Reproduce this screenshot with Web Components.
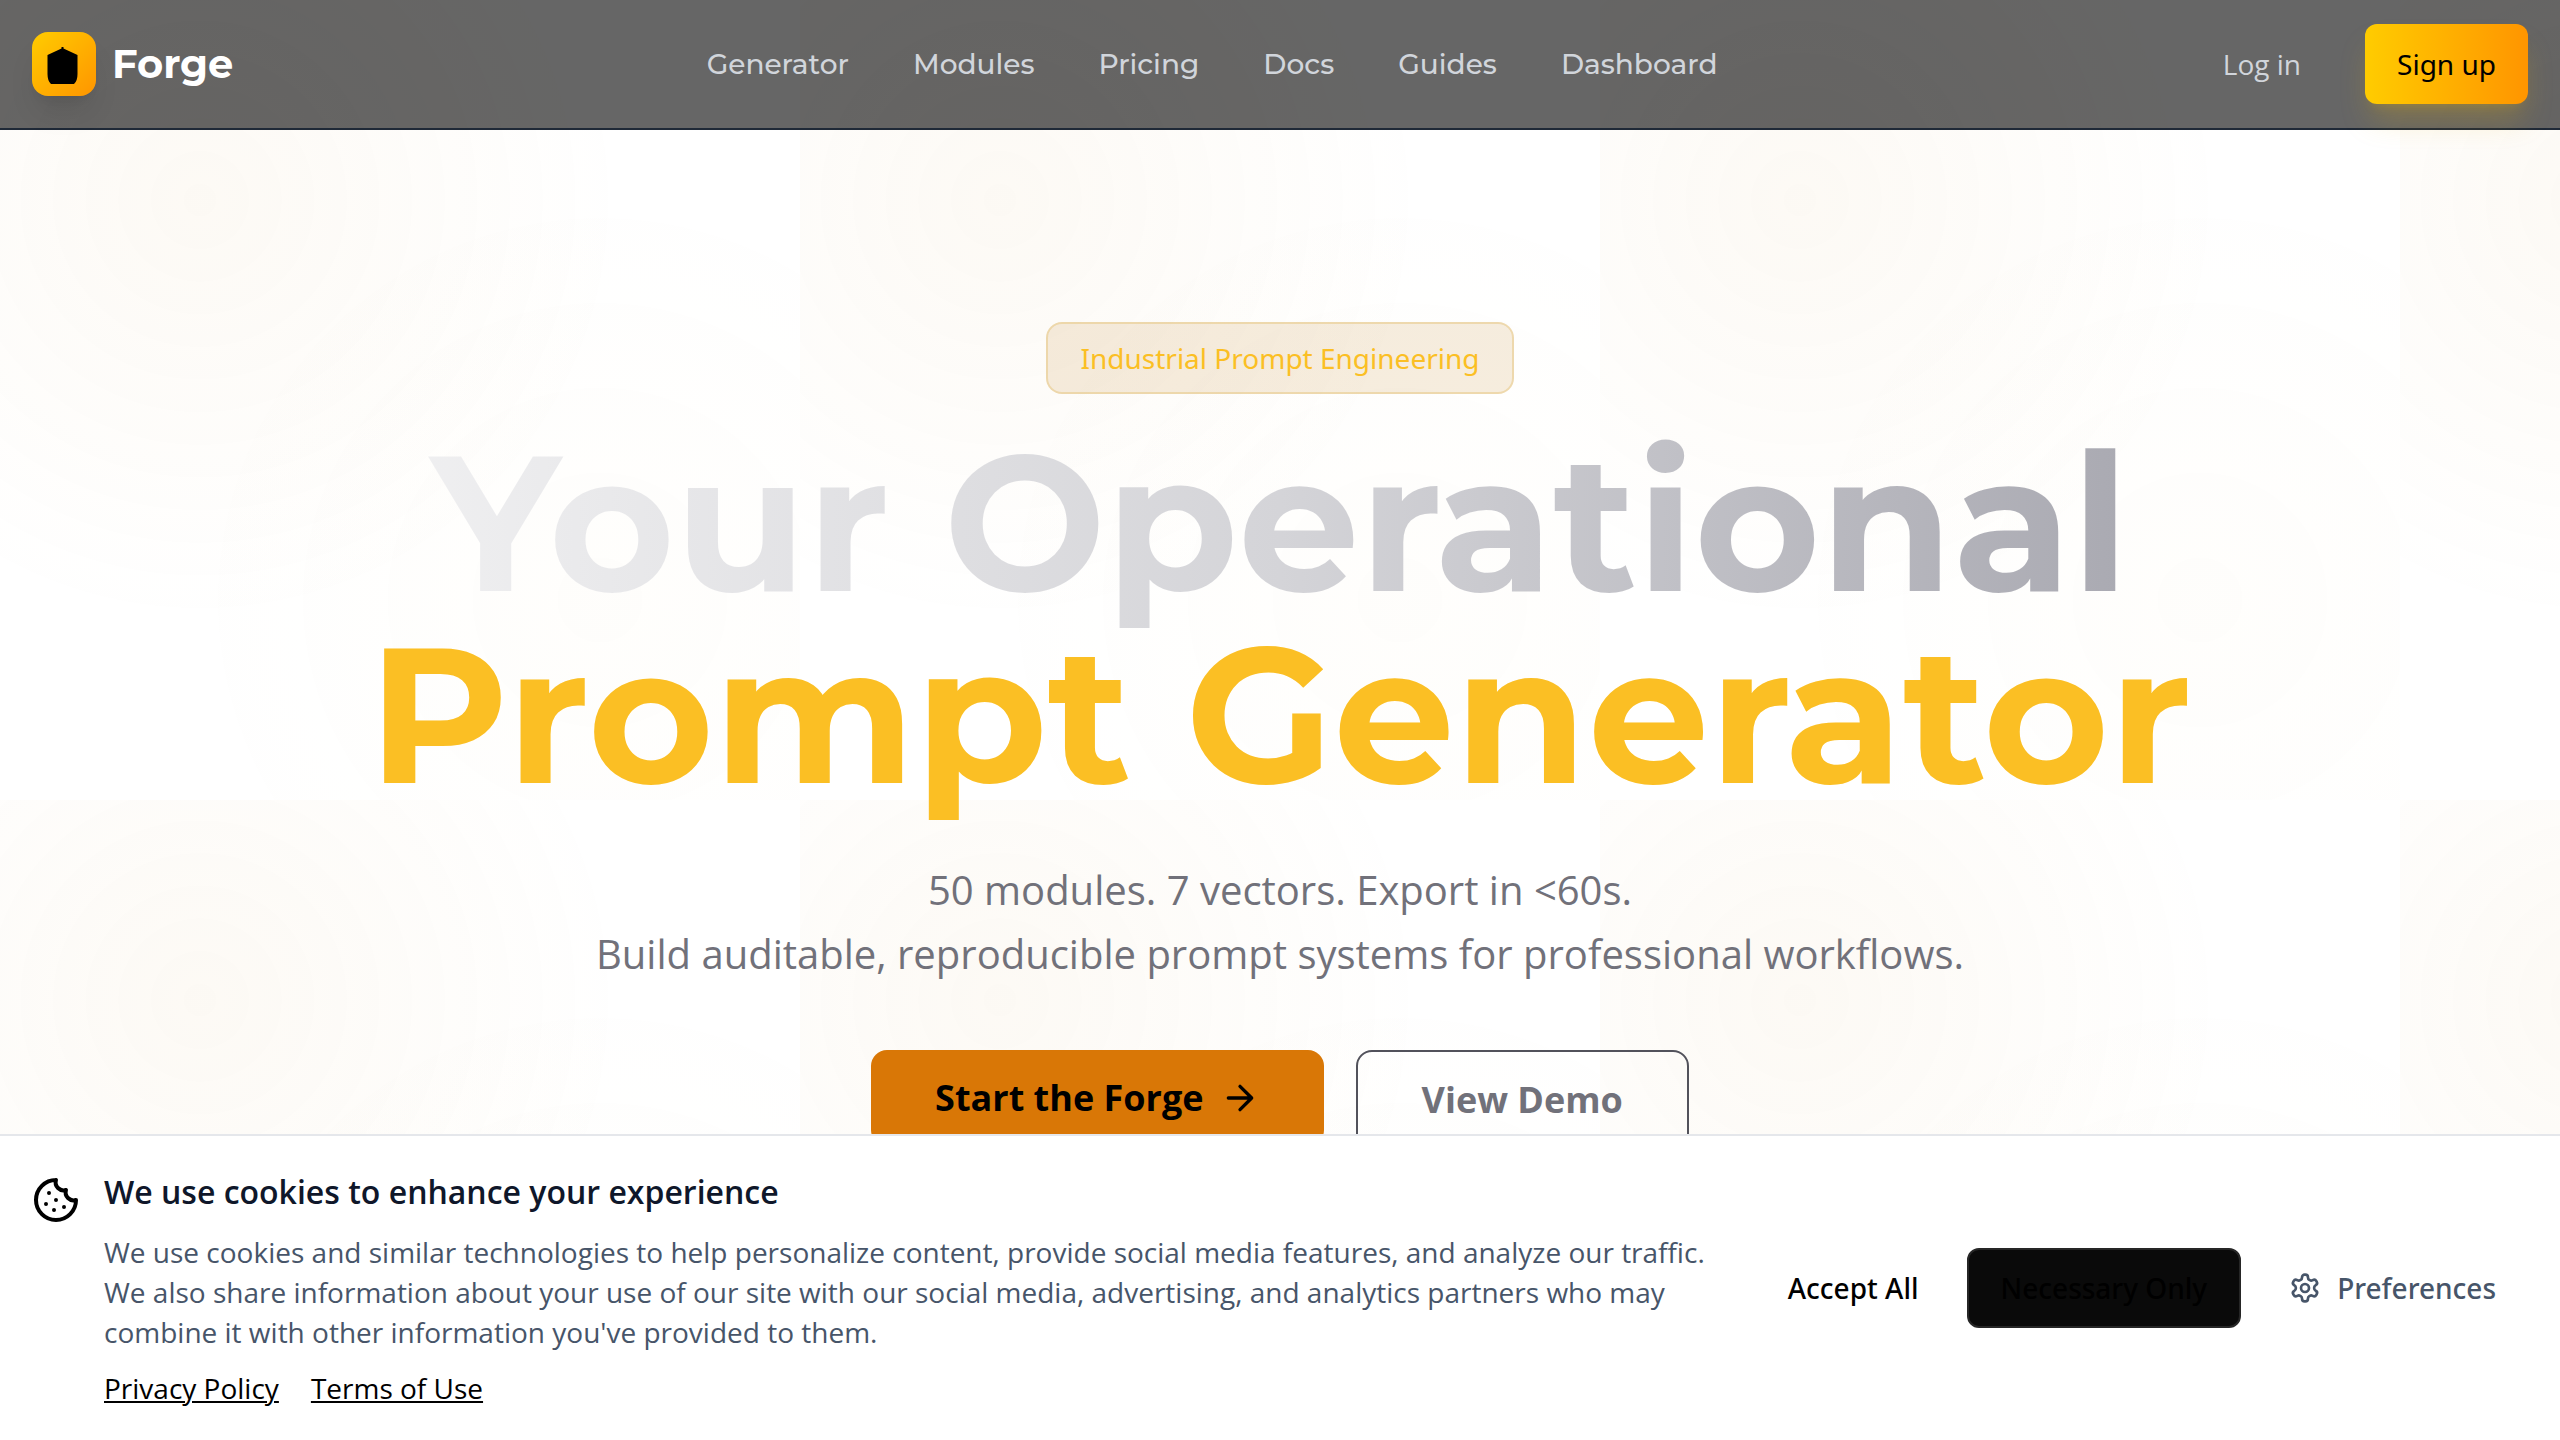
<!DOCTYPE html>
<html lang="en">
<head>
<meta charset="utf-8">
<meta name="viewport" content="width=device-width, initial-scale=1">
<title>Forge</title>
<style>
  body { margin: 0; background: #fff; font-family: "Open Sans", "Noto Sans", sans-serif; --display: Montserrat, "Open Sans", sans-serif; --control: "Noto Sans", "Open Sans", sans-serif; }
</style>
</head>
<body>
<forge-header>
  <forge-nav-link href="#generator">Generator</forge-nav-link>
  <forge-nav-link href="#modules">Modules</forge-nav-link>
  <forge-nav-link href="#pricing">Pricing</forge-nav-link>
  <forge-nav-link href="#docs">Docs</forge-nav-link>
  <forge-nav-link href="#guides">Guides</forge-nav-link>
  <forge-nav-link href="#dashboard">Dashboard</forge-nav-link>
</forge-header>
<forge-hero>
  <span slot="badge">Industrial Prompt Engineering</span>
  <span slot="lead">Your Operational</span>
  <span slot="accent">Prompt Generator</span>
</forge-hero>
<forge-cookies></forge-cookies>

<script>
const define = (name, html) => {
  const template = document.createElement('template');
  template.innerHTML = html;
  customElements.define(name, class extends HTMLElement {
    constructor() {
      super();
      this.attachShadow({ mode: 'open' }).append(template.content.cloneNode(true));
    }
    connectedCallback() {
      const link = this.shadowRoot.querySelector('a[data-host]');
      if (link) link.href = this.getAttribute('href') || '#';
    }
  });
};

define('forge-nav-link', `
<style>
  :host { display: block; }
  a { color: #d1d5db; text-decoration: none; font: 500 28px/40px var(--display); }
</style>
<a data-host><slot></slot></a>`);

define('forge-button', `
<style>
  :host { display: block; }
  button { display: flex; align-items: center; justify-content: center; gap: 16px; box-sizing: border-box; height: 80px; padding: 0 32px; margin: 0; border: 0; border-radius: 12px; background: transparent; color: #000; font: 500 28px/40px var(--control); white-space: nowrap; cursor: pointer; }
  :host([kind="muted"]) button { color: #d1d5db; font-family: "Open Sans", "Noto Sans", sans-serif; }
  :host([kind="slate"]) button { color: #475569; }
  :host([kind="gold"]) button { font-weight: 400; background: linear-gradient(to right, #ffcc00, #ff9500); box-shadow: 0 20px 30px -6px rgba(234,179,8,.25), 0 8px 12px -8px rgba(234,179,8,.25); }
  :host([kind="dark"]) button { background: #0a0a0a; border: 2px solid #262626; }
  :host([size="lg"]) button { height: 96px; padding: 0 64px; border-radius: 16px; font: 700 36px/56px "Open Sans", "Noto Sans", sans-serif; }
  :host([kind="amber"]) button { background: #d97706; }
  :host([kind="outline"]) button { height: 100px; border: 2px solid #52525b; color: #71717a; }
</style>
<button type="button"><slot></slot></button>`);

define('forge-header', `
<style>
  :host { display: block; position: sticky; top: 0; z-index: 10; background: rgba(0,0,0,.6); border-bottom: 2px solid #1f2937; }
  .bar { display: flex; align-items: center; justify-content: space-between; height: 128px; padding: 0 32px; }
  .brand { display: flex; align-items: center; gap: 16px; color: #fff; text-decoration: none; font: 700 40px/56px var(--display); }
  .mark { display: grid; place-items: center; width: 64px; height: 64px; border-radius: 16px; background: linear-gradient(135deg, #ffcc00, #ff9500); box-shadow: 0 20px 30px -6px rgba(0,0,0,.1), 0 8px 12px -8px rgba(0,0,0,.1); }
  svg { display: block; width: 40px; height: 40px; }
  nav { display: flex; gap: 64px; }
  .actions { display: flex; gap: 32px; }
</style>
<div class="bar">
  <a class="brand" href="#home"><span class="mark"><svg viewBox="0 0 40 40"><path d="M17.500 3h2v1.500L33.500 11v19q0 7-3.500 10H7Q3.500 37 3.500 30V11l14-6.500z"/></svg></span>Forge</a>
  <nav aria-label="Main"><slot></slot></nav>
  <div class="actions"><forge-button kind="muted">Log in</forge-button><forge-button kind="gold">Sign up</forge-button></div>
</div>`);

define('forge-hero', `
<style>
  :host { display: block; box-sizing: border-box; min-height: 100vh; margin-top: -130px; padding: 322px 32px 0; overflow: hidden; text-align: center;
    background: radial-gradient(circle at 25% 25%, rgba(205,145,45,.05) 0%, transparent 50%), radial-gradient(circle at 75% 75%, rgba(225,180,70,.02) 0%, transparent 50%); background-size: 800px 800px; }
  .badge { display: inline-block; padding: 14px 32px; border: 2px solid rgba(217,170,60,.3); border-radius: 16px; background: rgba(208,167,93,.2); color: #fbbf24; font: 400 28px/40px var(--control); vertical-align: top; }
  h1 { max-width: 2048px; margin: 32px auto 48px; font: 700 192px/192px var(--display); }
  .lead, .accent { display: block; }
  /* The gradient box reaches below the line so that descenders are painted whole. */
  .lead { padding-bottom: 32px; margin-bottom: -32px; color: transparent; background: linear-gradient(to right, #f4f4f5, #d4d4d8, #a1a1aa); -webkit-background-clip: text; background-clip: text; }
  .accent { color: #fbbf24; }
  p { margin: 0 0 64px; color: #71717a; font-size: 40px; line-height: 64px; }
  .cta { display: flex; justify-content: center; align-items: flex-start; gap: 32px; }
  svg { width: 40px; height: 40px; fill: none; stroke: currentColor; stroke-width: 2; stroke-linecap: round; stroke-linejoin: round; }
</style>
<div class="badge"><slot name="badge"></slot></div>
<h1><span class="lead"><slot name="lead"></slot></span><span class="accent"><slot name="accent"></slot></span></h1>
<p>50 modules. 7 vectors. Export in &lt;60s.<br>Build auditable, reproducible prompt systems for professional workflows.</p>
<div class="cta">
  <forge-button size="lg" kind="amber">Start the Forge <svg viewBox="0 0 24 24"><path d="M5 12h14M12 5l7 7-7 7"/></svg></forge-button>
  <forge-button size="lg" kind="outline">View Demo</forge-button>
</div>`);

define('forge-cookies', `
<style>
  :host { display: flex; align-items: center; gap: 48px; position: fixed; left: 0; right: 0; bottom: 0; z-index: 20; padding: 32px; background: #fff; border-top: 2px solid #e5e7eb; }
  .info { display: flex; flex: 1; align-items: flex-start; gap: 24px; }
  svg { flex: none; fill: none; stroke: currentColor; stroke-width: 2; stroke-linecap: round; stroke-linejoin: round; }
  .cookie { width: 48px; height: 48px; margin-top: 8px; }
  .gear { width: 32px; height: 32px; }
  h2 { margin: 0 0 16px; color: #0f172a; font-size: 32px; line-height: 48px; font-weight: 600; }
  p { margin: 0 0 16px; color: #475569; font-size: 28px; line-height: 40px; }
  .links { display: flex; gap: 32px; font-size: 28px; line-height: 40px; }
  a { color: #000; text-decoration-thickness: 2px; text-underline-offset: 2px; }
  .actions { display: flex; gap: 16px; }
</style>
<div class="info">
  <svg class="cookie" viewBox="0 0 24 24"><path d="M12 2a10 10 0 1 0 10 10 4 4 0 0 1-5-5 4 4 0 0 1-5-5M8.500 8.500v.01M16 15.500v.01M12 12v.01M11 17v.01M7 14v.01"/></svg>
  <div>
    <h2>We use cookies to enhance your experience</h2>
    <p>We use cookies and similar technologies to help personalize content, provide social media features, and analyze our traffic. We also share information about your use of our site with our social media, advertising, and analytics partners who may combine it with other information you've provided to them.</p>
    <div class="links"><a href="#privacy">Privacy Policy</a><a href="#terms">Terms of Use</a></div>
  </div>
</div>
<div class="actions">
  <forge-button>Accept All</forge-button>
  <forge-button kind="dark">Necessary Only</forge-button>
  <forge-button kind="slate"><svg class="gear" viewBox="0 0 24 24"><path d="M12.220 2h-.44a2 2 0 0 0-2 2v.18a2 2 0 0 1-1 1.730l-.43.25a2 2 0 0 1-2 0l-.15-.08a2 2 0 0 0-2.730.73l-.22.38a2 2 0 0 0 .73 2.730l.15.1a2 2 0 0 1 1 1.720v.51a2 2 0 0 1-1 1.740l-.15.09a2 2 0 0 0-.73 2.730l.22.38a2 2 0 0 0 2.730.73l.15-.08a2 2 0 0 1 2 0l.43.25a2 2 0 0 1 1 1.730V20a2 2 0 0 0 2 2h.44a2 2 0 0 0 2-2v-.18a2 2 0 0 1 1-1.730l.43-.25a2 2 0 0 1 2 0l.15.08a2 2 0 0 0 2.730-.73l.22-.39a2 2 0 0 0-.73-2.730l-.15-.08a2 2 0 0 1-1-1.740v-.5a2 2 0 0 1 1-1.740l.15-.09a2 2 0 0 0 .73-2.730l-.22-.38a2 2 0 0 0-2.730-.73l-.15.08a2 2 0 0 1-2 0l-.43-.25a2 2 0 0 1-1-1.730V4a2 2 0 0 0-2-2z"/><circle cx="12" cy="12" r="3"/></svg>Preferences</forge-button>
</div>`);
</script>
</body>
</html>
